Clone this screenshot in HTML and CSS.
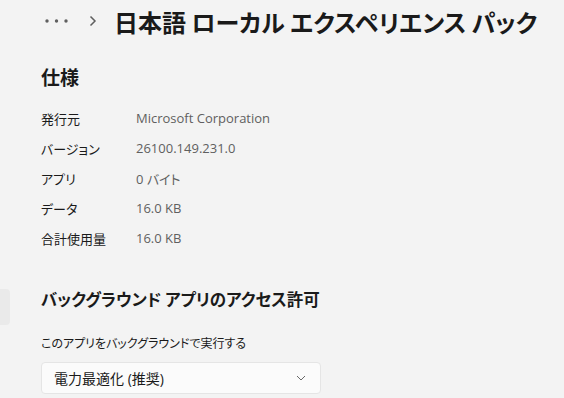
FILE: index.html
```html
<!DOCTYPE html>
<html lang="ja">
<head>
    <meta charset="UTF-8">
    <title>日本語 ローカル エクスペリエンス パック</title>
    <link rel="stylesheet" href="styles.css">
</head>
<body>
    <div class="nav-item"></div>
    <header class="breadcrumb">
        <svg class="more" width="24" height="6" viewBox="0 0 24 6"><circle cx="2" cy="3" r="1.7" fill="#5f5f5f"/><circle cx="11.5" cy="3" r="1.7" fill="#5f5f5f"/><circle cx="21" cy="3" r="1.7" fill="#5f5f5f"/></svg>
        <svg class="chevron" width="8" height="12" viewBox="0 0 8 12"><path d="M1.5 1.5 L6 6 L1.5 10.5" fill="none" stroke="#5f5f5f" stroke-width="1.5"/></svg>
        <h1>日本語 ローカル エクスペリエンス パック</h1>
    </header>

    <section class="specs">
        <h2>仕様</h2>
        <div class="spec-list">
            <div class="row"><span class="label">発行元</span><span class="value">Microsoft Corporation</span></div>
            <div class="row"><span class="label">バージョン</span><span class="value">26100.149.231.0</span></div>
            <div class="row"><span class="label">アプリ</span><span class="value">0 バイト</span></div>
            <div class="row"><span class="label">データ</span><span class="value">16.0 KB</span></div>
            <div class="row"><span class="label">合計使用量</span><span class="value">16.0 KB</span></div>
        </div>
    </section>

    <section class="background">
        <h2>バックグラウンド アプリのアクセス許可</h2>
        <p class="caption">このアプリをバックグラウンドで実行する</p>
        <div class="select">
            <span>電力最適化 (推奨)</span>
            <svg width="10" height="6" viewBox="0 0 10 6"><path d="M1 1 L5 5 L9 1" fill="none" stroke="#6a6a6a" stroke-width="1"/></svg>
        </div>
    </section>
</body>
</html>
```

FILE: styles.css
```css
body, html {
    margin: 0;
    padding: 0;
    background: #f3f3f3;
    color: #1a1a1a;
    font-family: "Open Sans", "Noto Sans CJK JP", sans-serif;
    font-feature-settings: "palt";
    overflow: hidden;
}

body {
    position: relative;
    height: 398px;
}

.nav-item {
    position: absolute;
    left: -6px;
    top: 289px;
    width: 16px;
    height: 36px;
    background: #eaeaea;
    border-radius: 4px;
}

.breadcrumb {
    display: flex;
    align-items: center;
    padding: 3px 0 0 45px;
    height: 36px;
}

.more {
    flex-shrink: 0;
    margin-right: 20px;
}

.chevron {
    flex-shrink: 0;
    margin-right: 17px;
}

.breadcrumb h1 {
    margin: 0;
    font-family: "Noto Sans CJK JP", sans-serif;
    font-size: 24px;
    font-weight: 700;
    white-space: nowrap;
}

.specs, .background {
    padding-left: 41px;
}

h2 {
    margin: 0;
    font-family: "Noto Sans CJK JP", sans-serif;
    font-weight: 700;
}

.specs h2 {
    margin-top: 24px;
    font-size: 19px;
    line-height: 28px;
}

.spec-list {
    margin-top: 12px;
}

.row {
    display: flex;
    height: 30px;
    align-items: center;
    font-size: 13px;
}

.label {
    width: 95px;
}

.value {
    color: #5f5f5f;
}

.background h2 {
    margin-top: 31px;
    font-size: 16.5px;
    line-height: 30px;
}

.caption {
    margin: 21px 0 0;
    font-size: 12px;
    line-height: 18px;
}

.select {
    box-sizing: border-box;
    margin-top: 9px;
    width: 280px;
    height: 32px;
    display: flex;
    align-items: center;
    justify-content: space-between;
    padding: 0 14px 0 12px;
    background: #fbfbfb;
    border: 1px solid #e5e5e5;
    border-radius: 4px;
    font-size: 14px;
}
```
